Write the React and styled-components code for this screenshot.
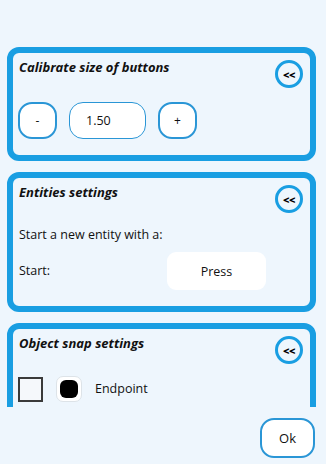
import React from "react";
import styled, { createGlobalStyle } from "styled-components";

const GlobalStyle = createGlobalStyle`
  html, body {
    margin: 0;
    padding: 0;
    background: #eef6fd;
  }
  body {
    font-family: "Open Sans", "Noto Sans", sans-serif;
    color: #111;
  }
`;

const Screen = styled.div`
  width: 326px;
  height: 464px;
  display: flex;
  flex-direction: column;
  background: #eef6fd;
`;

const Scroller = styled.div`
  height: 407px;
  overflow: hidden;
  padding: 47px 10px 0 7px;
  box-sizing: border-box;
  display: flex;
  flex-direction: column;
  gap: 11px;
`;

const Panel = styled.section`
  border: 6px solid #199ee2;
  border-radius: 12px;
  padding: 0 7px 16px 6px;
  display: flex;
  flex-direction: column;
  flex-shrink: 0;
`;

const Header = styled.div`
  display: flex;
  justify-content: space-between;
  align-items: flex-start;
`;

const Title = styled.h3`
  margin: 0;
  padding-top: 5px;
  font-size: 13px;
  font-weight: 700;
  font-style: italic;
  line-height: 18px;
`;

const CollapseButton = styled.button`
  width: 28px;
  height: 28px;
  margin-top: 7px;
  border-radius: 50%;
  border: 3px solid #199ee2;
  background: #eef6fd;
  padding: 0;
  font-family: inherit;
  font-size: 11px;
  font-weight: 800;
  letter-spacing: -0.5px;
  color: #000;
  display: flex;
  align-items: center;
  justify-content: center;
  box-sizing: border-box;
`;

const Row = styled.div`
  display: flex;
  align-items: center;
  gap: ${(p) => p.$gap || 12}px;
  margin-top: ${(p) => p.$top || 0}px;
  margin-left: ${(p) => p.$left || 0}px;
`;

const StepButton = styled.button`
  width: 39px;
  height: 37px;
  border-radius: 14px;
  border: 2px solid #2a96d6;
  background: #fff;
  font-family: inherit;
  font-size: 12px;
  color: #111;
  padding: 0;
`;

const ValueBox = styled.div`
  width: 77px;
  height: 37px;
  border-radius: 14px;
  border: 1.5px solid #2a96d6;
  background: #fff;
  box-sizing: border-box;
  font-size: 12.5px;
  display: flex;
  align-items: center;
  padding-left: 16px;
`;

const Text = styled.div`
  font-size: 12.5px;
  line-height: 18px;
  flex: ${(p) => (p.$grow ? 1 : "none")};
  margin-top: ${(p) => p.$top || 0}px;
`;

const PressButton = styled.button`
  width: 99px;
  height: 38px;
  border: none;
  border-radius: 9px;
  background: #fff;
  font-family: inherit;
  font-size: 12.5px;
  color: #111;
  margin-right: 37px;
`;

const Checkbox = styled.span`
  width: 25px;
  height: 25px;
  box-sizing: border-box;
  border: 2px solid #3a3a3a;
  background: #f5f8fb;
`;

const Swatch = styled.span`
  width: 26px;
  height: 26px;
  box-sizing: border-box;
  border: 1px solid #dde3e8;
  border-radius: 7px;
  background: #fff;
  display: flex;
  align-items: center;
  justify-content: center;

  &::after {
    content: "";
    width: 18px;
    height: 18px;
    border-radius: 6px;
    background: #000;
  }
`;

const Footer = styled.div`
  flex: 1;
  display: flex;
  justify-content: flex-end;
  align-items: flex-start;
  padding: 11px 11px 0 0;
`;

const OkButton = styled.button`
  width: 55px;
  height: 40px;
  border: 2px solid #2a96d6;
  border-radius: 14px;
  background: #fff;
  font-family: inherit;
  font-size: 13px;
  color: #111;
`;

function SettingsPanel({ title, children }) {
  return (
    <Panel>
      <Header>
        <Title>{title}</Title>
        <CollapseButton>&lt;&lt;</CollapseButton>
      </Header>
      {children}
    </Panel>
  );
}

export default function App() {
  return (
    <Screen>
      <GlobalStyle />
      <Scroller>
        <SettingsPanel title="Calibrate size of buttons">
          <Row $top={14} $left={-1}>
            <StepButton>-</StepButton>
            <ValueBox>1.50</ValueBox>
            <StepButton>+</StepButton>
          </Row>
        </SettingsPanel>
        <SettingsPanel title="Entities settings">
          <Text $top={13}>Start a new entity with a:</Text>
          <Row $top={8}>
            <Text $grow>Start:</Text>
            <PressButton>Press</PressButton>
          </Row>
        </SettingsPanel>
        <SettingsPanel title="Object snap settings">
          <Row $top={12} $left={-1} $gap={13}>
            <Checkbox />
            <Swatch />
            <Text>Endpoint</Text>
          </Row>
        </SettingsPanel>
      </Scroller>
      <Footer>
        <OkButton>Ok</OkButton>
      </Footer>
    </Screen>
  );
}
